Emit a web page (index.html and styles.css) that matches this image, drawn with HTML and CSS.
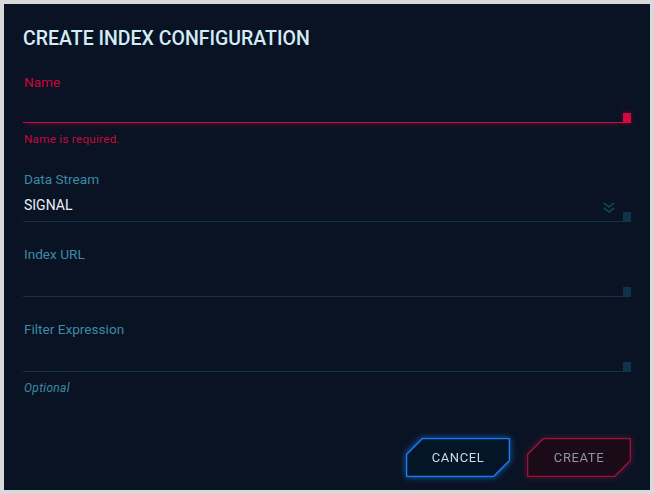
FILE: index.html
```html
<!DOCTYPE html>
<html lang="en">
<head>
<meta charset="utf-8">
<title>Create Index Configuration</title>
<link rel="stylesheet" href="styles.css">
</head>
<body>
<div class="dialog">
  <h1 class="title">CREATE INDEX CONFIGURATION</h1>

  <div class="field field-error">
    <div class="label">Name</div>
    <div class="control">
      <div class="input"><span class="value"></span></div>
      <div class="mark"></div>
    </div>
    <div class="error">Name is required.</div>
  </div>

  <div class="field">
    <div class="label">Data Stream</div>
    <div class="control">
      <div class="input">
        <span class="value">SIGNAL</span>
        <svg class="chevron" width="12" height="12" viewBox="0 0 12 12" aria-hidden="true">
          <path d="M0.8 0.8 L6 5 L11.2 0.8" fill="none" stroke="#0e4a67" stroke-width="1.6"/>
          <path d="M0.8 5.8 L6 10 L11.2 5.8" fill="none" stroke="#0e4a67" stroke-width="1.6"/>
        </svg>
      </div>
      <div class="mark"></div>
    </div>
  </div>

  <div class="field">
    <div class="label">Index URL</div>
    <div class="control">
      <div class="input"><span class="value"></span></div>
      <div class="mark"></div>
    </div>
  </div>

  <div class="field field-last">
    <div class="label">Filter Expression</div>
    <div class="control">
      <div class="input"><span class="value"></span></div>
      <div class="mark"></div>
    </div>
    <div class="hint">Optional</div>
  </div>

  <div class="footer">
    <div class="btn btn-cancel"><div class="btn-frame"><div class="btn-fill">CANCEL</div></div></div>
    <div class="btn btn-create"><div class="btn-frame"><div class="btn-fill">CREATE</div></div></div>
  </div>
</div>
</body>
</html>
```
FILE: styles.css
```css
* { box-sizing: border-box; }

html, body {
  margin: 0;
  padding: 0;
}

body {
  background: #d9d9d9;
  padding: 4px;
  font-family: Roboto, "Liberation Sans", sans-serif;
}

.dialog {
  width: 646px;
  height: 486px;
  background: #0a1324;
  padding: 23px 19px 13px 19px;
  display: flex;
  flex-direction: column;
}

.title {
  margin: 0;
  font-size: 19.5px;
  line-height: 24px;
  font-weight: 500;
  color: #d4ecf7;
  letter-spacing: 0;
}

.field {
  display: flex;
  flex-direction: column;
  margin-top: 23px;
}

.field + .field { margin-top: 24px; }

.field-error { margin-bottom: 1px; }

.label {
  padding-left: 1px;
  font-size: 13.6px;
  line-height: 16px;
  color: #3c8aa4;
}

.control {
  display: flex;
  align-items: flex-end;
}

.input {
  flex: 1;
  height: 35px;
  border-bottom: 1px solid #0f3247;
  display: flex;
  align-items: center;
  padding: 8px 0 0 1px;
}

.value {
  flex: 1;
  font-size: 14px;
  line-height: 16px;
  color: #e8f1f5;
  margin-top: -6px;
}

.chevron {
  margin: -1px 8px 0 0;
}

.mark {
  width: 8px;
  height: 10px;
  background: #0e3449;
}

.field-error .label { color: #c9083a; }

.field-error .input {
  height: 33px;
  border-bottom-color: #d3093c;
  box-shadow: 0 3px 6px -3px rgba(211, 9, 60, 0.45);
}

.field-error .mark {
  background: #d3093c;
  box-shadow: 0 0 5px rgba(211, 9, 60, 0.45);
}

.error {
  margin-top: 9px;
  padding-left: 1px;
  font-size: 11.6px;
  line-height: 14px;
  color: #c9083a;
  letter-spacing: 0.3px;
}

.hint {
  margin-top: 9px;
  padding-left: 1px;
  font-size: 12px;
  line-height: 14px;
  font-style: italic;
  color: #3c8aa4;
  letter-spacing: 0.3px;
}

.footer {
  margin-top: auto;
  display: flex;
  justify-content: flex-end;
  gap: 17px;
}

.btn {
  width: 104px;
  height: 39px;
}

.btn-frame {
  width: 100%;
  height: 100%;
  padding: 1.3px;
  clip-path: polygon(16px 0, 100% 0, 100% calc(100% - 16px), calc(100% - 16px) 100%, 0 100%, 0 16px);
}

.btn-fill {
  width: 100%;
  height: 100%;
  display: flex;
  align-items: center;
  justify-content: center;
  font-size: 13px;
  font-weight: 400;
  letter-spacing: 0.6px;
  clip-path: polygon(15.4px 0, 100% 0, 100% calc(100% - 15.4px), calc(100% - 15.4px) 100%, 0 100%, 0 15.4px);
}

.btn-cancel { filter: drop-shadow(0 0 3px rgba(27, 124, 245, 0.8)); }
.btn-cancel .btn-frame { background: #1b7cf5; }
.btn-cancel .btn-fill { background: #051528; color: #c8dde8; }

.btn-create { filter: drop-shadow(0 0 3px rgba(170, 16, 60, 0.5)); }
.btn-create .btn-frame { background: #9e113b; }
.btn-create .btn-fill { background: #1b0a17; color: #8b96a2; }
```
